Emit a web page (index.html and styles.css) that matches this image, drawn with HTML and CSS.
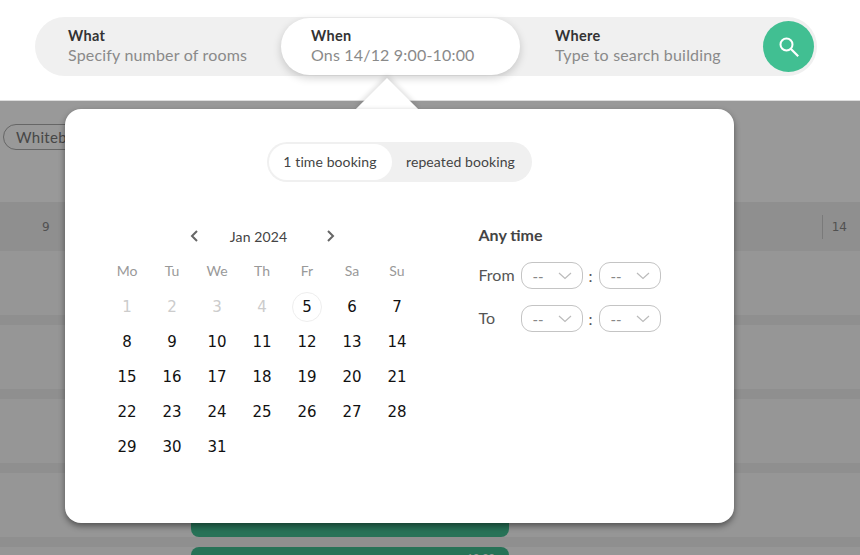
FILE: index.html
```html
<!DOCTYPE html>
<html lang="en">
<head>
<meta charset="utf-8">
<title>Room booking</title>
<link rel="stylesheet" href="styles.css">
</head>
<body>
<div class="stage">
  <header class="header">
    <div class="search">
      <div class="field field-what"><b>What</b><span>Specify number of rooms</span></div>
      <div class="field field-when"><b>When</b><span>Ons 14/12 9:00-10:00</span></div>
      <div class="field field-where"><b>Where</b><span>Type to search building</span></div>
      <button class="go" aria-label="Search">
        <svg width="24" height="24" viewBox="0 0 24 24" fill="none" stroke="#fff" stroke-width="2"><circle cx="9.5" cy="9.5" r="6"/><path d="M14 14l7.2 7.2" stroke-width="2.2"/></svg>
      </button>
    </div>
  </header>
  <main class="content">
    <div class="chips"><span class="chip">Whiteboard</span></div>
    <div class="hours">
      <span class="hour-first">9</span>
      <span class="hour-last">14</span>
    </div>
    <div class="row"></div>
    <div class="gap"></div>
    <div class="row"></div>
    <div class="gap"></div>
    <div class="row"></div>
    <div class="gap"></div>
    <div class="row"><div class="booking booking-end"></div></div>
    <div class="gap"></div>
    <div class="row"><div class="booking booking-start"><span>10:00</span></div></div>
  </main>
  <div class="overlay"></div>
  <div class="arrow"></div>
  <section class="pop">
    <div class="toggle">
      <span class="tab tab-on">1 time booking</span>
      <span class="tab">repeated booking</span>
    </div>
    <div class="panes">
      <div class="cal">
        <div class="cal-nav">
          <svg class="chev" width="10" height="14" viewBox="0 0 10 14" fill="none" stroke="#666" stroke-width="2"><path d="M8 2L3 7l5 5"/></svg>
          <span class="month">Jan 2024</span>
          <svg class="chev" width="10" height="14" viewBox="0 0 10 14" fill="none" stroke="#666" stroke-width="2"><path d="M2 2l5 5-5 5"/></svg>
        </div>
        <div class="grid week">
          <span>Mo</span><span>Tu</span><span>We</span><span>Th</span><span>Fr</span><span>Sa</span><span>Su</span>
        </div>
        <div class="grid days">
          <span class="off">1</span><span class="off">2</span><span class="off">3</span><span class="off">4</span><span><i class="today">5</i></span><span>6</span><span>7</span>
          <span>8</span><span>9</span><span>10</span><span>11</span><span>12</span><span>13</span><span>14</span>
          <span>15</span><span>16</span><span>17</span><span>18</span><span>19</span><span>20</span><span>21</span>
          <span>22</span><span>23</span><span>24</span><span>25</span><span>26</span><span>27</span><span>28</span>
          <span>29</span><span>30</span><span>31</span>
        </div>
      </div>
      <div class="time">
        <h3>Any time</h3>
        <div class="time-row">
          <label>From</label>
          <span class="sel">--<svg width="14" height="8" viewBox="0 0 14 8" fill="none" stroke="#bbb" stroke-width="1.2"><path d="M1 1l6 5.5L13 1"/></svg></span>
          <span class="colon">:</span>
          <span class="sel">--<svg width="14" height="8" viewBox="0 0 14 8" fill="none" stroke="#bbb" stroke-width="1.2"><path d="M1 1l6 5.5L13 1"/></svg></span>
        </div>
        <div class="time-row">
          <label>To</label>
          <span class="sel">--<svg width="14" height="8" viewBox="0 0 14 8" fill="none" stroke="#bbb" stroke-width="1.2"><path d="M1 1l6 5.5L13 1"/></svg></span>
          <span class="colon">:</span>
          <span class="sel">--<svg width="14" height="8" viewBox="0 0 14 8" fill="none" stroke="#bbb" stroke-width="1.2"><path d="M1 1l6 5.5L13 1"/></svg></span>
        </div>
      </div>
    </div>
  </section>
</div>
</body>
</html>
```
FILE: styles.css
```css
* { box-sizing: border-box; }
html, body { margin: 0; padding: 0; }
body { font-family: "Lato", "Noto Sans", sans-serif; background: #fff; }
.stage { position: relative; width: 860px; height: 555px; overflow: hidden; background: #fff; }

.header { height: 101px; padding: 17px 0 0 35px; border-bottom: 1px solid #ddd; }
.search { position: relative; display: flex; align-items: center; width: 782px; height: 59px; border-radius: 30px; background: #f0f0f0; }
.field { display: flex; flex-direction: column; justify-content: center; height: 57px; padding-bottom: 1px; font-size: 16px; line-height: 21px; }
.field b { font-size: 14.5px; line-height: 17px; font-weight: 700; color: #333; letter-spacing: .3px; }
.field span { color: #8a8a8a; letter-spacing: .18px; white-space: nowrap; }
.field-what { width: 246px; padding-left: 33px; }
.field-when { width: 239px; padding-left: 30px; background: #fff; border-radius: 29px; box-shadow: 0 3px 8px rgba(0,0,0,.18); }
.field-where { width: 243px; padding-left: 35px; }
.go { display: flex; align-items: center; justify-content: center; width: 51px; height: 51px; padding: 0; border: 0; border-radius: 50%; background: #41bf92; }

.content { background: #fff; }
.chips { height: 101px; padding: 23px 0 0 3px; }
.chip { display: inline-block; height: 26px; padding: 0 12px; border: 1px solid #aaa; border-radius: 13px; font-size: 15px; line-height: 24px; color: #777; letter-spacing: .3px; }
.hours { display: flex; justify-content: space-between; align-items: center; height: 49px; padding: 0 13px 0 42px; background: #efefef; font-family: "DejaVu Sans", sans-serif; font-size: 12px; color: #888; }
.hour-last { padding-left: 9px; height: 24px; line-height: 24px; border-left: 1px solid #ccc; }
.row { height: 64px; background: #fafafa; padding-left: 191px; overflow: hidden; }
.gap { height: 10px; background: #efefef; }
.booking { width: 318px; background: #41bf92; }
.booking-end { height: 64px; border-radius: 0 0 8px 8px; }
.booking-start { height: 64px; border-radius: 8px 8px 0 0; padding: 4px 14px; text-align: right; font-size: 11px; color: #fff; }

.overlay { position: absolute; left: 0; right: 0; top: 101px; bottom: 0; background: rgba(0,0,0,.4); }
.arrow { position: absolute; left: 365px; top: 87px; width: 44px; height: 44px; background: #fff; transform: rotate(45deg); box-shadow: -2px -2px 5px rgba(0,0,0,.12); }
.pop { position: absolute; left: 65px; top: 109px; width: 669px; height: 414px; padding-top: 33px; border-radius: 16px; background: #fff; box-shadow: 0 3px 6px rgba(0,0,0,.45); display: flex; flex-direction: column; align-items: center; }

.toggle { display: flex; height: 40px; padding: 2px; border-radius: 20px; background: #f0f0f0; font-size: 14px; color: #444; letter-spacing: .1px; }
.tab { display: flex; align-items: center; justify-content: center; height: 36px; padding: 0 1px 1px 0; border-radius: 18px; }
.tab-on { width: 123px; background: #fff; }
.tab:last-child { width: 138px; }

.panes { align-self: stretch; display: flex; padding: 40px 0 0 39.5px; }
.cal { width: 315px; }
.cal-nav { display: flex; align-items: center; height: 28px; padding-left: 84px; }
.month { width: 58px; margin: 0 38px 0 31px; font-size: 14px; color: #444; letter-spacing: .1px; text-align: center; white-space: nowrap; }
.chev { flex: none; }
.grid { display: grid; grid-template-columns: repeat(7, 45px); }
.grid span { display: flex; align-items: center; justify-content: center; }
.week { margin-top: 6px; height: 28px; font-size: 14px; color: #999; }
.days { margin-top: 5px; grid-auto-rows: 35px; font-family: "DejaVu Sans", sans-serif; font-size: 15px; color: #111; }
.days .off { color: #ccc; }
.today { display: flex; align-items: center; justify-content: center; width: 30px; height: 30px; border: 1px solid #eee; border-radius: 50%; font-style: normal; }

.time { margin-left: 59px; }
.time h3 { margin: 0; height: 28px; font-size: 16px; line-height: 26px; font-weight: 700; color: #444; }
.time-row { display: flex; align-items: center; height: 27px; margin-top: 16px; font-size: 16px; color: #555; }
.time h3 + .time-row { margin-top: 12px; }
.time-row label { width: 42px; padding-bottom: 2px; }
.sel { display: flex; align-items: center; justify-content: space-between; width: 62px; height: 27px; padding: 0 10px 0 11px; border: 1px solid #c4c4c4; border-radius: 11px; font-size: 15px; color: #888; }
.colon { width: 16px; text-align: center; color: #555; }
```
